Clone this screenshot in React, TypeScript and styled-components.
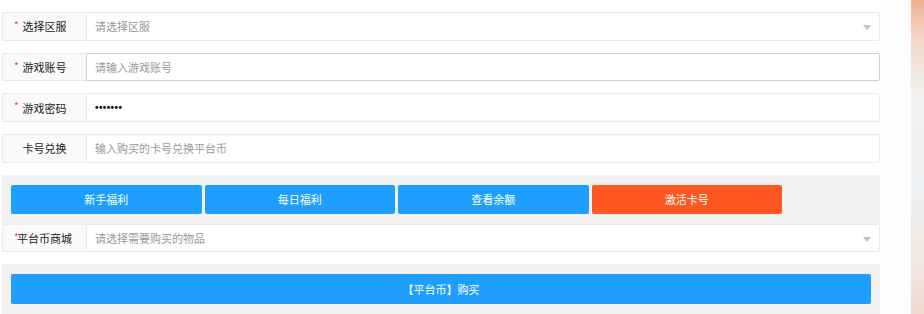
import React from 'react';
import styled, { createGlobalStyle } from 'styled-components';

const GlobalStyle = createGlobalStyle`
  html, body {
    margin: 0;
    padding: 0;
    background: #fff;
  }
  body {
    font-family: "Noto Sans CJK SC", "Noto Sans", sans-serif;
    font-size: 11px;
    color: #333;
  }
`;

const Page = styled.div`
  display: flex;
  width: 924px;
  height: 314px;
  overflow: hidden;
`;

const Form = styled.div`
  width: 878px;
  margin-left: 2px;
  padding-top: 12px;
  display: flex;
  flex-direction: column;
`;

const Side = styled.div`
  flex: 1;
  display: flex;
  justify-content: flex-end;
  background: linear-gradient(90deg, #fff 0%, #fafafa 100%);
`;

const Strip = styled.div`
  width: 13px;
  background: linear-gradient(
    180deg,
    #efb193 0%,
    #f4d6c7 12%,
    #f1f1f1 30%,
    #edf0f2 60%,
    #f3e6e3 85%,
    #f2d6d0 100%
  );
`;

const Row = styled.div<{ $gap?: number }>`
  display: flex;
  height: 29px;
  margin-bottom: ${(p) => p.$gap ?? 12}px;
`;

const Label = styled.div`
  position: relative;
  width: 84px;
  box-sizing: border-box;
  display: flex;
  align-items: center;
  justify-content: center;
  background: #fafafa;
  border: 1px solid #eaeaea;
  border-right: none;
  border-radius: 2px 0 0 2px;
  color: #222;
  font-size: 11px;
`;

const Star = styled.span`
  position: absolute;
  left: 11px;
  top: 4px;
  color: #ff3b30;
  font-size: 10px;
`;

const Field = styled.div<{ $focus?: boolean }>`
  flex: 1;
  position: relative;
  display: flex;
  align-items: center;
  padding-left: 8px;
  box-sizing: border-box;
  background: #fff;
  border: 1px solid ${(p) => (p.$focus ? '#cfcfcf' : '#eaeaea')};
  border-radius: 0 2px 2px 0;
  color: #999;
  font-size: 11px;
`;

const Dots = styled.span`
  font-family: "Liberation Sans", Arial, sans-serif;
  color: #111;
  font-weight: bold;
  font-size: 10px;
  letter-spacing: 0.4px;
`;

const Arrow = styled.span`
  position: absolute;
  right: 8px;
  top: 12px;
  width: 0;
  height: 0;
  border-left: 4px solid transparent;
  border-right: 4px solid transparent;
  border-top: 5px solid #c2c2c2;
`;

const Panel = styled.div`
  background: #f1f1f1;
  padding: 10px 9px;
`;

const ButtonGrid = styled.div`
  display: grid;
  grid-template-columns: repeat(4, 190.5px);
  gap: 3px;
`;

const Button = styled.div<{ $warm?: boolean }>`
  height: 29px;
  display: flex;
  align-items: center;
  justify-content: center;
  background: ${(p) => (p.$warm ? '#ff5722' : '#1e9fff')};
  color: #fff;
  border-radius: 2px;
  font-size: 11px;
`;

const BuyButton = styled(Button)`
  height: 30px;
`;

const Spacer = styled.div`
  height: 12px;
`;

type FieldRowProps = {
  label: string;
  required?: boolean;
  select?: boolean;
  focus?: boolean;
  gap?: number;
  children: React.ReactNode;
};

const FieldRow = ({ label, required, select, focus, gap, children }: FieldRowProps) => (
  <Row $gap={gap}>
    <Label>
      {required && <Star>*</Star>}
      {label}
    </Label>
    <Field $focus={focus}>
      {children}
      {select && <Arrow />}
    </Field>
  </Row>
);

const App = () => {
  return (
    <Page>
      <GlobalStyle />
      <Form>
        <FieldRow label="选择区服" required select>
          请选择区服
        </FieldRow>
        <FieldRow label="游戏账号" required focus>
          请输入游戏账号
        </FieldRow>
        <FieldRow label="游戏密码" required>
          <Dots>•••••••</Dots>
        </FieldRow>
        <FieldRow label="卡号兑换">输入购买的卡号兑换平台币</FieldRow>
        <Panel>
          <ButtonGrid>
            <Button>新手福利</Button>
            <Button>每日福利</Button>
            <Button>查看余额</Button>
            <Button $warm>激活卡号</Button>
          </ButtonGrid>
        </Panel>
        <FieldRow label="平台币商城" required select gap={0}>
          请选择需要购买的物品
        </FieldRow>
        <Spacer />
        <Panel>
          <BuyButton>【平台币】购买</BuyButton>
        </Panel>
      </Form>
      <Side>
        <Strip />
      </Side>
    </Page>
  );
};

export default App;
